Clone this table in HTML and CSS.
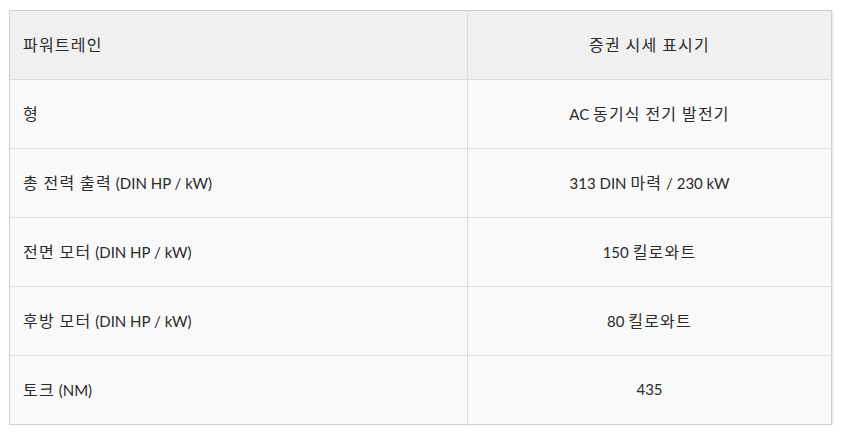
FILE: index.html
```html
<!DOCTYPE html>
<html lang="ko">
<head>
<meta charset="utf-8">
<link rel="stylesheet" href="styles.css">
</head>
<body>
<div class="wrap">
<table class="spec">
<thead>
<tr><th class="label"><span class="ko">파워트레인</span></th><th class="value"><span class="ko">증권 시세 표시기</span></th></tr>
</thead>
<tbody>
<tr><td class="label"><span class="ko">형</span></td><td class="value">AC <span class="ko">동기식 전기 발전기</span></td></tr>
<tr><td class="label"><span class="ko">총 전력 출력</span> (DIN HP / kW)</td><td class="value">313 DIN <span class="ko">마력</span> / 230 kW</td></tr>
<tr><td class="label"><span class="ko">전면 모터</span> (DIN HP / kW)</td><td class="value">150 <span class="ko">킬로와트</span></td></tr>
<tr><td class="label"><span class="ko">후방 모터</span> (DIN HP / kW)</td><td class="value">80 <span class="ko">킬로와트</span></td></tr>
<tr><td class="label"><span class="ko">토크</span> (NM)</td><td class="value">435</td></tr>
</tbody>
</table>
</div>
</body>
</html>
```
FILE: styles.css
```css
html, body { margin: 0; padding: 0; background: #fff; }
.wrap { padding: 10px 10px 0 9px; }
.spec {
  width: 823px;
  border-collapse: collapse;
  border: 1px solid #cfcfcf;
  box-shadow: 1px 1px 2px rgba(0,0,0,0.12);
  font-family: Lato, "Noto Sans CJK KR", sans-serif;
  font-size: 15px;
  color: #2b2b2b;
}
.spec th, .spec td {
  height: 69px;
  padding: 0 13px 2px;
  box-sizing: border-box;
  font-weight: normal;
  border-top: 1px solid #dcdcdc;
  vertical-align: middle;
}
.spec th { background: #f0f0f0; border-top: none; }
.spec td { background: #f9f9f9; }
.spec .label { width: 458px; text-align: left; border-right: 1px solid #dcdcdc; }
.spec .value { text-align: center; }
.ko {
  font-family: "Noto Sans CJK KR", sans-serif;
  font-size: 16px;
  letter-spacing: 1.2px;
  word-spacing: -1px;
}
```
